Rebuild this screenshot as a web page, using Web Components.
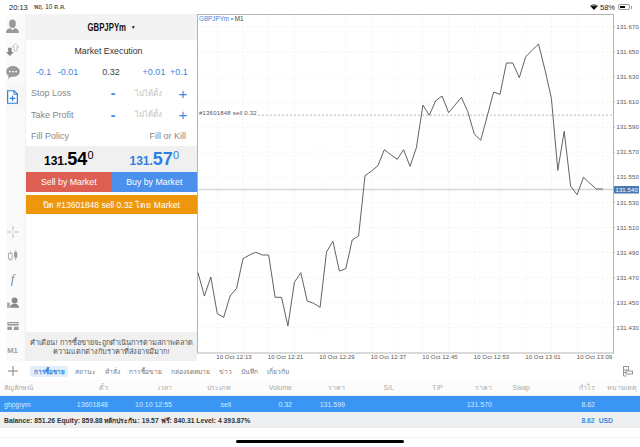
<!DOCTYPE html>
<html>
<head>
<meta charset="utf-8">
<style>
  html, body { margin: 0; padding: 0; background: #fff; }
  body { font-family: "Liberation Sans", "Noto Sans", "DejaVu Sans", sans-serif; color: #333; }
</style>
</head>
<body>
<app-root>
  <status-bar></status-bar>
  <side-rail slot="left"></side-rail>
  <trade-panel slot="panel"></trade-panel>
  <chart-view slot="chart"></chart-view>
  <tab-bar slot="tabs">
    <tab-item active>การซื้อขาย</tab-item>
    <tab-item>สถานะ</tab-item>
    <tab-item>คำสั่ง</tab-item>
    <tab-item>การซื้อขาย</tab-item>
    <tab-item>กล่องจดหมาย</tab-item>
    <tab-item>ข่าว</tab-item>
    <tab-item>บันทึก</tab-item>
    <tab-item>เกี่ยวกับ</tab-item>
  </tab-bar>
  <trade-row slot="table" head>
    <span>สัญลักษณ์</span><span>ตั๋ว</span><span>เวลา</span><span>ประเภท</span><span>Volume</span><span>ราคา</span><span>S/L</span><span>T/P</span><span>ราคา</span><span>Swap</span><span>กำไร</span><span>หมายเหตุ</span>
  </trade-row>
  <trade-row slot="table" selected>
    <span>gbpjpym</span><span>13601848</span><span>10.10 12:55</span><span>sell</span><span>0.32</span><span>131.599</span><span></span><span></span><span>131.570</span><span></span><span>8.62</span><span></span>
  </trade-row>
  <balance-row slot="table"></balance-row>
</app-root>

<script>
function el(name, html) {
  const t = document.createElement('template');
  t.innerHTML = html;
  customElements.define(name, class extends HTMLElement {
    constructor() {
      super();
      this.attachShadow({ mode: 'open' }).appendChild(t.content.cloneNode(true));
    }
  });
}

el('app-root', `
  <style>
    :host { display: flex; flex-direction: column; width: 640px; height: 447px; overflow: hidden; background: #fff; }
    .main { display: flex; height: 347px; }
    .chart { flex: 1; min-width: 0; }
    .tabs { height: 19px; }
    .bottom { flex: 1; display: flex; flex-direction: column; }
    .home { margin: auto 0 4.500px; align-self: center; width: 168px; height: 3px; border-radius: 2px; background: #000; }
    .line { border-top: 1px solid #f1f1f1; margin-top: 9px; }
  </style>
  <slot></slot>
  <div class="main">
    <slot name="left"></slot>
    <slot name="panel"></slot>
    <div class="chart"><slot name="chart"></slot></div>
  </div>
  <div class="tabs"><slot name="tabs"></slot></div>
  <slot name="table"></slot>
  <div class="bottom"><div class="line"></div><div class="home"></div></div>
`);

el('status-bar', `
  <style>
    :host { display: flex; align-items: center; height: 14px; padding: 0 8px 0 9px; font-size: 7.500px; color: #222; }
    .d { margin-left: 6px; font-size: 6.300px; }
    .r { margin-left: auto; display: flex; align-items: center; gap: 2px; }
    .bat { width: 12px; height: 6px; border: 1px solid #999; border-radius: 2px; padding: 1px; box-sizing: border-box; margin-left: 1px; }
    .bat i { display: block; width: 58%; height: 100%; background: #000; }
    .tip { width: 1px; height: 3px; background: #999; margin-left: -1px; }
  </style>
  <span>20:13</span><span class="d">พฤ. 10 ต.ค.</span>
  <span class="r">
    <svg width="8" height="6" viewBox="0 0 9 7"><path d="M4.500 7 0 2.400C2.500 0 6.500 0 9 2.400Z" fill="#111"/><path d="M1.400 2.600C3.200 1.200 5.800 1.200 7.600 2.600" stroke="#fff" stroke-width=".6" fill="none"/></svg>
    <span>58%</span><span class="bat"><i></i></span><span class="tip"></span>
  </span>
`);

el('side-rail', `
  <style>
    :host { display: flex; flex-direction: column; width: 26px; height: 347px; background: linear-gradient(90deg, #fff 6px, #fafafa 6px); border-right: 1px solid #f0f0f0; box-sizing: border-box; }
    .c { height: 23.400px; flex: none; display: flex; align-items: center; justify-content: center; }
    .on { background: #f6f6f6; height: 25px; margin-left: 6px; }
    .on svg { margin-left: -6px; }
    .sp { flex: 1; }
    .last { height: 21.400px; margin-top: 2px; }
    .m { font-size: 7.500px; font-weight: bold; color: #a0a0a0; }
    .f { font: italic 13px "Liberation Serif", serif; color: #8a8a8a; }
  </style>
  <div class="c"><svg width="13" height="14" viewBox="0 0 14 15"><ellipse cx="7" cy="5" rx="3.600" ry="4.600" fill="#999"/><path d="M0 15c0-4 3-5 5-5l2 2 2-2c2 0 5 1 5 5Z" fill="#999"/></svg></div>
  <div class="c"><svg width="13" height="13" viewBox="0 0 15 15"><path d="M2.500 5.500h4v5H9l-4.500 4.500L0 10.500h2.500Z" fill="#888"/><path d="M9.500 9V4.500H7.300L11 .7l3.700 3.800h-2.200V9Z" fill="#fff" stroke="#aaa" stroke-width=".8"/></svg></div>
  <div class="c"><svg width="14" height="13" viewBox="0 0 15 14"><path d="M7.500 0C3.400 0 .2 2.600.2 6c0 1.900 1 3.500 2.600 4.500L2 13.600l3.500-2.100c.7.100 1.300.2 2 .2 4.100 0 7.300-2.500 7.300-5.700S11.600 0 7.500 0Z" fill="#999"/><circle cx="4.200" cy="6" r="1" fill="#fff"/><circle cx="7.500" cy="6" r="1" fill="#fff"/><circle cx="10.800" cy="6" r="1" fill="#fff"/></svg></div>
  <div class="c on"><svg width="11" height="14" viewBox="0 0 12 15"><path d="M.7.700h7l3.600 3.600v10H.7Z" fill="#fff" stroke="#2e7fe0" stroke-width="1.300"/><path d="M7.500.7v3.800h3.800" fill="none" stroke="#2e7fe0"/><path d="M6 5.800v6.200M2.900 8.900h6.200" stroke="#2e7fe0" stroke-width="1.300"/></svg></div>
  <div class="sp"></div>
  <div class="c"><svg width="12" height="12" viewBox="0 0 13 13"><path d="M6.500 0v5M6.500 8v5M0 6.500h5M8 6.500h5" stroke="#bbb" stroke-width="1.100"/></svg></div>
  <div class="c"><svg width="10" height="12" viewBox="0 0 13 15"><path d="M3 1v13" stroke="#aaa"/><rect x=".8" y="4" width="4.500" height="7.500" fill="#fff" stroke="#999"/><path d="M10 0v13" stroke="#999"/><rect x="8" y="2.500" width="4" height="7" fill="#999"/></svg></div>
  <div class="c"><span class="f">f</span></div>
  <div class="c"><svg width="12" height="11" viewBox="0 0 15 13"><circle cx="9.500" cy="4" r="3.700" fill="#888"/><path d="M4 13c0-3.500 2.500-5 5.500-5s5.500 1.500 5.500 5Z" fill="#888"/><path d="M0 13V6.500h3.500l1 6.500Z" fill="#aaa"/></svg></div>
  <div class="c"><svg width="12" height="8" viewBox="0 0 14 10"><path d="M0 0h14v4.500H0Z" fill="#999"/><path d="M0 6h5.500v4H0ZM8 6h6v4H8Z" fill="#999"/><path d="M1 1.200h12v1.300H1Z" fill="#e2e2e2"/></svg></div>
  <div class="c last"><span class="m">M1</span></div>
`);

el('trade-panel', `
  <style>
    :host { display: flex; flex-direction: column; width: 171px; height: 347px; font-size: 9px; color: #888; }
    .head { height: 26px; background: #f3f3f3; display: flex; align-items: center; justify-content: center; gap: 5px; color: #111; font-weight: bold; font-size: 10px; }
    .head b { display: inline-block; transform: scaleX(.78); margin: 0 -5.500px; }
    .head i { font-style: normal; font-size: 5px; }
    .row { height: 21.300px; display: flex; align-items: center; padding: 0 11px 0 5px; }
    .t { justify-content: center; font-size: 8.800px; color: #333; }
    .vol { color: #3a86e0; font-size: 9px; padding: 0 0 0 7px; }
    .vol span { text-align: center; }
    .vol span:nth-child(1) { width: 21px; }
    .vol span:nth-child(2) { width: 28px; }
    .vol span:nth-child(3) { width: 58px; color: #444; }
    .vol span:nth-child(4) { width: 28px; }
    .vol span:nth-child(5) { width: 22px; }
    .st { padding-right: 0; }
    .lab { width: 76px; }
    .b { width: 12px; text-align: center; color: #3a86e0; font-size: 14px; font-weight: bold; line-height: 1; }
    .off { width: 58px; text-align: center; color: #c4c4c4; font-size: 8px; }
    .pl { font-size: 15px; font-weight: normal; }
    .fill { justify-content: space-between; }
    .prices { height: 26px; background: #f0f0f0; display: flex; }
    .btns { display: flex; height: 20px; }
    .btns div { flex: 1; display: flex; align-items: center; justify-content: center; color: #fff; font-size: 8.800px; }
    .sell { background: #dd5f54; }
    .buy { background: #4a90ec; }
    .close { height: 19px; margin-top: 3px; background: #ee960c; color: #fff; font-size: 8.500px; display: flex; align-items: center; justify-content: center; }
    .warn { margin-top: auto; height: 29px; background: #f0f0f0; color: #555; font-size: 7.300px; line-height: 9px; display: flex; flex-direction: column; justify-content: center; align-items: center; white-space: nowrap; }
    price-tile { flex: 1; }
  </style>
  <div class="head"><b>GBPJPYm</b><i>▼</i></div>
  <div class="row t">Market Execution</div>
  <div class="row vol"><span>-0.1</span><span>-0.01</span><span>0.32</span><span>+0.01</span><span>+0.1</span></div>
  <div class="row st"><span class="lab">Stop Loss</span><span class="b">-</span><span class="off">ไม่ได้ตั้ง</span><span class="b pl">+</span></div>
  <div class="row st"><span class="lab">Take Profit</span><span class="b">-</span><span class="off">ไม่ได้ตั้ง</span><span class="b pl">+</span></div>
  <div class="row fill"><span>Fill Policy</span><span>Fill or Kill</span></div>
  <div class="prices">
    <price-tile><span slot="a">131.</span><span slot="b">54</span><span slot="c">0</span></price-tile>
    <price-tile style="color:#2f7fe0"><span slot="a">131.</span><span slot="b">57</span><span slot="c">0</span></price-tile>
  </div>
  <div class="btns"><div class="sell">Sell by Market</div><div class="buy">Buy by Market</div></div>
  <div class="close">ปิด #13601848 sell 0.32 โดย Market</div>
  <div class="warn"><span>คำเตือน! การซื้อขายจะถูกดำเนินการตามสภาพตลาด</span><span>ความแตกต่างกับราคาที่ส่งอาจมีมาก!</span></div>
`);

el('price-tile', `
  <style>
    :host { display: flex; align-items: baseline; justify-content: center; font-weight: bold; color: #000; padding-top: 3px; box-sizing: border-box; }
    ::slotted([slot=a]) { font-size: 12px; }
    ::slotted([slot=b]) { font-size: 18px; line-height: 20px; }
    ::slotted([slot=c]) { font-size: 11px; font-weight: normal; position: relative; top: -6px; }
  </style>
  <slot name="a"></slot><slot name="b"></slot><slot name="c"></slot>
`);

const ys = [272.7,296,277,313.7,317.3,296,288.3,258.7,255,252.3,255,255,297.3,297.3,326,282.3,272.7,301,303.3,307.3,252,241.3,271,268.7,240,236,
  175.7,171,165.7,149.7,154.7,159.3,149.7,166.3,147.7,
  105,115.3,100.7,96,112.7,105,97.3,111.7,134,140.3,116.7,92,94.3,63,63,77.7,56.7,50.3,44,70,98.3,170.3,131.3,186,194.7,177.3,183.3,189,189];
const prices = ['131.670','131.650','131.630','131.610','131.590','131.570','131.550','131.530','131.510','131.490','131.470','131.450','131.430'];
const times = ['12:13','12:21','12:29','12:37','12:45','12:53','13:01','13:09'];

let g = '';
prices.forEach((p, i) => {
  const y = 26.8 + i * 25.08;
  g += `<path d="M198 ${y}H613" stroke="#e2e2e2" stroke-width=".8" stroke-dasharray="1 3"/>`;
  g += `<path d="M613 ${y}h2" stroke="#999" stroke-width=".6"/>`;
  g += `<text x="616.500" y="${y + 2.2}" class="ax">${p}</text>`;
});
for (let k = 0; k < 16; k++) {
  const x = 217.3 + k * 25.7;
  g += `<path d="M${x} 15V352" stroke="#e6e6e6" stroke-width=".8" stroke-dasharray="1 3"/>`;
}
times.forEach((t, i) => {
  g += `<text x="${234 + i * 51.5}" y="359" text-anchor="middle" class="ax">10 Oct ${t}</text>`;
});
const pts = ys.map((y, i) => (198 + i * 6.425).toFixed(1) + ',' + y).join(' ');

el('chart-view', `
  <style>
    :host { display: block; width: 443px; height: 347px; }
    svg { display: block; font-family: "Liberation Sans", sans-serif; }
    .ax { font-size: 6px; fill: #555; letter-spacing: .1px; }
  </style>
  <svg width="443" height="347" viewBox="197 14 443 347">
    ${g}
    <rect x="197.500" y="14.500" width="416" height="338.500" fill="none" stroke="#b4b4b4"/>
    <path d="M198 115.200H613" stroke="#aaa" stroke-width=".8" stroke-dasharray="2 2"/>
    <rect x="198" y="110" width="60" height="7" fill="#fff"/>
    <text x="199" y="115" font-size="6" fill="#555" letter-spacing=".2">#13601848 sell 0.32</text>
    <path d="M198 189.500H613" stroke="#d6d6d6" stroke-width="1.400"/>
    <polyline points="${pts}" fill="none" stroke="#505050" stroke-width=".9"/>
    <text x="199" y="20.500" font-size="6.300"><tspan fill="#3a86e0">GBPJPYm</tspan><tspan fill="#3a86e0"> • </tspan><tspan fill="#444">M1</tspan></text>
    <rect x="614" y="186" width="25" height="7.500" fill="#4a78b0"/>
    <text x="615.500" y="192" class="ax" style="fill:#fff">131.540</text>
  </svg>
`);

el('tab-bar', `
  <style>
    :host { display: flex; align-items: center; height: 19px; padding: 1px 7px 0 8px; box-sizing: border-box; }
    .add { display: flex; margin-right: 12px; }
    .end { margin-left: auto; display: flex; }
  </style>
  <span class="add"><svg width="10" height="10" viewBox="0 0 10 10"><path d="M5 0v10M0 5h10" stroke="#777" stroke-width=".9"/></svg></span>
  <slot></slot>
  <span class="end"><svg width="11" height="11" viewBox="0 0 11 11" fill="none" stroke="#8a8a8a" stroke-width=".9"><rect x="1.500" y=".5" width="5" height="3.500"/><rect x="4" y="5" width="6.500" height="3"/><path d="M1.500 4v6h3M1.500 6.500h2.500"/></svg></span>
`);

el('tab-item', `
  <style>
    :host { display: block; padding: 0 4.500px; font-size: 6.600px; line-height: 11px; height: 11px; color: #777; border-radius: 2px; white-space: nowrap; }
    :host([active]) { background: #e3eefb; color: #2f7fe0; font-weight: bold; font-size: 6.300px; padding: 0 3.500px; margin-right: 2px; }
  </style>
  <slot></slot>
`);

el('trade-row', `
  <style>
    :host { display: grid; grid-template-columns: 60px 48px 64px 59px 61px 53px 49px 49px 49px 38px 65px 42px; align-items: center; height: 16px; box-sizing: border-box; padding-right: 3px; font-size: 7px; color: #aaa; background: #fcfcfc; }
    :host([head]) { border-bottom: 1px solid #eee; }
    :host([selected]) { background: #3b96f3; color: #d6e9fd; }
    ::slotted(span) { text-align: right; white-space: nowrap; }
    ::slotted(span:first-child) { text-align: left; padding-left: 4px; }
  </style>
  <slot></slot>
`);

el('balance-row', `
  <style>
    :host { display: flex; align-items: center; height: 16px; background: #eeeff1; padding: 0 27px 0 4px; font-size: 6.800px; font-weight: bold; color: #333; }
    .r { margin-left: auto; color: #3b8ae6; display: flex; gap: 4px; }
  </style>
  <span>Balance: 851.26 Equity: 859.88 หลักประกัน: 19.57 ฟรี: 840.31 Level: 4 393.87%</span>
  <span class="r"><span>8.62</span><span>USD</span></span>
`);
</script>
</body>
</html>
